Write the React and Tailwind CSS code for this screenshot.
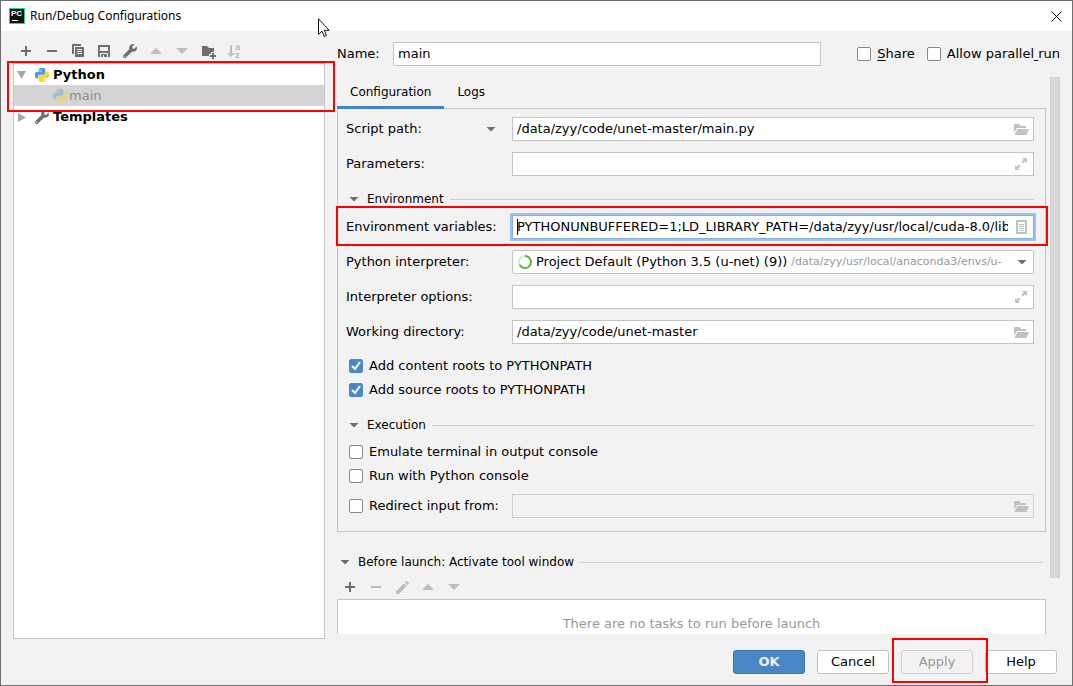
import { useState } from "react";
import { FaWrench } from "react-icons/fa";
import { MdEdit } from "react-icons/md";

const ENV_VARS =
  "PYTHONUNBUFFERED=1;LD_LIBRARY_PATH=/data/zyy/usr/local/cuda-8.0/lib64";

const PYTHON_HALF =
  "M14.25.18l.9.2.73.26.59.3.45.32.34.34.25.34.16.33.1.3.04.26.02.2-.01.13V8.5l-.05.63-.13.55-.21.46-.26.38-.3.31-.33.25-.35.19-.35.14-.33.1-.3.07-.26.04-.21.02H8.77l-.69.05-.59.14-.5.22-.41.27-.33.32-.27.35-.2.36-.15.37-.1.35-.07.32-.04.27-.02.21v3.06H3.17l-.21-.03-.28-.07-.32-.12-.35-.18-.36-.26-.36-.36-.35-.46-.32-.59-.28-.73-.21-.88-.14-1.05-.05-1.23.06-1.22.16-1.04.24-.87.32-.71.36-.57.4-.44.42-.33.42-.24.4-.16.36-.1.32-.05.24-.01h.16l.06.01h8.16v-.83H6.18l-.01-2.75-.02-.37.05-.34.11-.31.17-.28.25-.26.31-.23.38-.2.44-.18.51-.15.58-.12.64-.1.71-.06.77-.04.84-.02 1.27.05zm-6.3 1.98l-.23.33-.08.41.08.41.23.34.33.22.41.09.41-.09.33-.22.23-.34.08-.41-.08-.41-.23-.33-.33-.22-.41-.09-.41.09z";

function Icon({ children, className = "" }) {
  return (
    <svg
      viewBox="0 0 16 16"
      className={`w-4 h-4 shrink-0 ${className}`}
      fill="currentColor"
      aria-hidden="true"
    >
      {children}
    </svg>
  );
}

const AddIcon = () => (
  <Icon>
    <path d="M7 3h2v4h4v2H9v4H7V9H3V7h4z" />
  </Icon>
);

const RemoveIcon = () => (
  <Icon>
    <path d="M3 7h10v2H3z" />
  </Icon>
);

const CopyIcon = () => (
  <Icon>
    <path d="M2 1h9v2H4v8H2z" />
    <path
      fillRule="evenodd"
      d="M5 4h9v10H5zM7 6v1h5V6zM7 8v1h5V8zM7 10v1h5v-1z"
    />
  </Icon>
);

const SaveIcon = () => (
  <Icon>
    <path
      fillRule="evenodd"
      d="M2 2h12v12h-2v-4H4v4H2zM4 4v4h8V4zM5 11h6v3H8v-2H7v2H5z"
    />
  </Icon>
);

const UpIcon = () => (
  <Icon>
    <path d="M8 5l6 6H2z" />
  </Icon>
);

const DownIcon = () => (
  <Icon>
    <path d="M2 5h12l-6 6z" />
  </Icon>
);

const NewFolderIcon = () => (
  <Icon>
    <path d="M2 3h5l2 2h5v4h-3v2H9v2H2z" />
    <path d="M12 10h2v2h2v2h-2v2h-2v-2h-2v-2h2z" />
  </Icon>
);

const SortIcon = () => (
  <Icon>
    <path d="M4 2h2v8h3l-4 4-4-4h3z" />
    <text x="9" y="7" fontSize="8" fontWeight="bold">
      a
    </text>
    <text x="9" y="15" fontSize="8" fontWeight="bold">
      z
    </text>
  </Icon>
);

const FolderIcon = () => (
  <Icon>
    <path d="M1 3h5l2 2h5v2H4l-3 5z" />
    <path d="M4.500 8H16l-2.500 6H1.500z" />
  </Icon>
);

const ExpandIcon = () => (
  <Icon>
    <path d="M9 2h5v5l-1.700-1.700-2.300 2.300-1.600-1.600 2.300-2.300zM2 14V9l1.700 1.700L6 8.400 7.600 10l-2.300 2.300L7 14z" />
  </Icon>
);

const ListIcon = () => (
  <Icon>
    <path
      fillRule="evenodd"
      d="M3 1h11v14H3zM5 3v10h7V3zM6 5h5v1H6zM6 7h5v1H6zM6 9h5v1H6zM6 11h4v1H6z"
    />
  </Icon>
);

function PythonIcon({ className = "" }) {
  return (
    <svg
      viewBox="0 0 24 24"
      className={`w-[14px] h-[14px] shrink-0 ${className}`}
      aria-hidden="true"
    >
      <path d={PYTHON_HALF} fill="#4b9fd5" />
      <path d={PYTHON_HALF} fill="#ffd21f" transform="rotate(180 12 12)" />
    </svg>
  );
}

function Arrow({ className = "" }) {
  return (
    <svg
      viewBox="0 0 10 10"
      className={`w-[10px] h-[10px] shrink-0 ${className}`}
      fill="currentColor"
      aria-hidden="true"
    >
      <path d="M0.500 3h9L5 7.500z" />
    </svg>
  );
}

function TreeArrow({ className = "" }) {
  return (
    <svg
      viewBox="0 0 10 10"
      className={`w-[10px] h-[10px] shrink-0 text-[#a8a8a8] ${className}`}
      fill="currentColor"
      aria-hidden="true"
    >
      <path d="M0 1h9L4.500 9z" />
    </svg>
  );
}

function ToolButton({ label, disabled, children }) {
  return (
    <button
      type="button"
      aria-label={label}
      disabled={disabled}
      className="w-[26px] h-6 flex items-center justify-center text-[#6e6e6e] disabled:text-[#bdbdbd]"
    >
      {children}
    </button>
  );
}

function Checkbox({ id, defaultChecked = false, children }) {
  const [checked, setChecked] = useState(defaultChecked);
  return (
    <div className="h-6 flex items-center gap-[6px]">
      <span className="relative w-[14px] h-[14px] shrink-0">
        <input
          id={id}
          type="checkbox"
          checked={checked}
          onChange={(e) => setChecked(e.target.checked)}
          className="block appearance-none w-[14px] h-[14px] rounded-xs bg-white border border-[#878787] checked:bg-[#4a88cc] checked:border-[#4a88cc]"
        />
        {checked && (
          <svg
            viewBox="0 0 14 14"
            className="absolute inset-0 pointer-events-none"
            fill="none"
            stroke="#fff"
            strokeWidth="2"
            aria-hidden="true"
          >
            <path d="M3 7l3 3 5-7" />
          </svg>
        )}
      </span>
      <label htmlFor={id} className="whitespace-pre">
        {children}
      </label>
    </div>
  );
}

function FieldRow({ id, label, extra, children }) {
  return (
    <div className="relative flex items-center">
      <div className="w-[166px] shrink-0 flex items-center justify-between pr-4">
        <label htmlFor={id} className="whitespace-nowrap">
          {label}
        </label>
        {extra}
      </div>
      {children}
    </div>
  );
}

function TextField({ id, label, value = "", icon, action, focused, disabled }) {
  return (
    <div
      className={`relative flex-1 min-w-0 h-6 flex items-center border ${
        focused
          ? "border-[#87afda] ring-2 ring-[#97c3f3] bg-white"
          : disabled
            ? "border-[#cfcfcf]"
            : "border-[#c4c4c4] bg-white"
      }`}
    >
      {focused && <span className="absolute left-1 top-[3px] w-px h-4 bg-black" />}
      <input
        id={id}
        type="text"
        aria-label={label}
        defaultValue={value}
        disabled={disabled}
        spellCheck={false}
        className="flex-1 min-w-0 h-full pl-1 pb-0.5 bg-transparent outline-none"
      />
      <button
        type="button"
        aria-label={action}
        disabled={disabled}
        className="w-[25px] h-full flex items-center justify-center text-[#bcc2c6]"
      >
        {icon}
      </button>
    </div>
  );
}

function SectionHeader({ children }) {
  return (
    <div className="h-4 flex items-center text-xs">
      <button type="button" className="flex items-center gap-2">
        <Arrow className="text-[#6e6e6e]" />
        <span className="whitespace-nowrap">{children}</span>
      </button>
      <span className="ml-[6px] flex-1 h-px bg-[#cdcdcd]" />
    </div>
  );
}

// red frame drawn round a highlighted area
function Highlight({ className }) {
  return (
    <span
      className={`absolute z-10 border-2 border-[#ff0000] pointer-events-none ${className}`}
    />
  );
}

function TitleBar() {
  return (
    <header className="h-[30px] shrink-0 bg-white flex items-center pl-2 pr-[10px]">
      <svg viewBox="0 0 16 16" className="w-4 h-4" aria-hidden="true">
        <rect width="16" height="16" fill="#21d789" />
        <rect x="1" y="1" width="14" height="14" fill="#111" />
        <text
          x="2"
          y="8"
          fontSize="8"
          fontWeight="bold"
          fontFamily="Liberation Sans"
          fill="#fff"
        >
          PC
        </text>
        <rect x="3" y="12" width="6" height="1" fill="#fff" />
      </svg>
      <h1 className="ml-[5px] flex-1 text-xs font-['Noto_Sans',sans-serif]">
        Run/Debug Configurations
      </h1>
      <button type="button" aria-label="Close">
        <svg
          viewBox="0 0 11 11"
          className="w-[11px] h-[11px]"
          stroke="#000"
          aria-hidden="true"
        >
          <path d="M.5.5l10 10M10.500.5l-10 10" />
        </svg>
      </button>
    </header>
  );
}

function Sidebar() {
  return (
    <aside className="w-[312px] shrink-0 pt-2 flex flex-col">
      <div className="h-6 flex">
        <ToolButton label="Add">
          <AddIcon />
        </ToolButton>
        <ToolButton label="Remove">
          <RemoveIcon />
        </ToolButton>
        <ToolButton label="Copy">
          <CopyIcon />
        </ToolButton>
        <ToolButton label="Save">
          <SaveIcon />
        </ToolButton>
        <ToolButton label="Edit templates">
          <FaWrench size={14} />
        </ToolButton>
        <ToolButton label="Move up" disabled>
          <UpIcon />
        </ToolButton>
        <ToolButton label="Move down" disabled>
          <DownIcon />
        </ToolButton>
        <ToolButton label="New folder">
          <NewFolderIcon />
        </ToolButton>
        <ToolButton label="Sort" disabled>
          <SortIcon />
        </ToolButton>
      </div>
      <div className="relative flex-1 bg-white border border-[#c4c4c4]">
        <Highlight className="-top-[3px] -left-[7px] -right-[11px] h-[51px]" />
        <ul>
          <li>
            <div className="h-[21px] pl-[3px] flex items-center font-bold">
              <TreeArrow />
              <PythonIcon className="ml-2 mr-1" />
              Python
            </div>
            <ul>
              <li className="h-[21px] pl-[39px] flex items-center gap-[2px] bg-[#d4d4d4] text-[#8c8c8c]">
                <PythonIcon className="opacity-40" />
                main
              </li>
            </ul>
          </li>
          <li className="h-[21px] pl-[3px] flex items-center font-bold">
            <TreeArrow className="-rotate-90" />
            <FaWrench size={14} className="ml-2 mr-1 text-[#6e6e6e]" />
            Templates
          </li>
        </ul>
      </div>
    </aside>
  );
}

function ConfigurationForm() {
  return (
    <div className="border border-[#c4c4c4] pt-2 pl-2 pr-[11px] pb-[13px]">
      <div className="flex flex-col gap-[11px]">
        <FieldRow
          id="script"
          label="Script path:"
          extra={
            <button type="button" aria-label="Choose target">
              <Arrow className="text-[#6e6e6e]" />
            </button>
          }
        >
          <TextField
            id="script"
            value="/data/zyy/code/unet-master/main.py"
            icon={<FolderIcon />}
            action="Browse"
          />
        </FieldRow>
        <FieldRow id="params" label="Parameters:">
          <TextField id="params" icon={<ExpandIcon />} action="Expand" />
        </FieldRow>
      </div>

      <div className="mt-[15px] mb-2 pl-[3px]">
        <SectionHeader>Environment</SectionHeader>
      </div>

      <div className="flex flex-col gap-[11px]">
        <FieldRow id="env" label="Environment variables:">
          <TextField
            id="env"
            value={ENV_VARS}
            icon={<ListIcon />}
            action="Edit variables"
            focused
          />
          <Highlight className="-top-[9px] -left-[10px] -right-[14px] -bottom-[7px]" />
        </FieldRow>
        <FieldRow id="interpreter" label="Python interpreter:">
          <div className="flex-1 min-w-0 h-6 pl-1 pr-[6px] flex items-center bg-white border border-[#c4c4c4] rounded-xs">
            <svg
              viewBox="0 0 16 16"
              className="w-4 h-4 shrink-0"
              fill="none"
              strokeWidth="2"
              aria-hidden="true"
            >
              <path d="M8 2a6 6 0 1 1-5.200 9" stroke="#62b543" />
              <path
                d="M2.800 11A6 6 0 0 1 8 2"
                stroke="#62b543"
                strokeOpacity="0.6"
                strokeDasharray="1 1"
              />
            </svg>
            <select
              id="interpreter"
              className="ml-[3px] shrink-0 appearance-none field-sizing-content bg-transparent outline-none"
            >
              <option>Project Default (Python 3.5 (u-net) (9))</option>
            </select>
            <span className="ml-1 flex-1 min-w-0 overflow-hidden whitespace-nowrap text-[11px] text-[#999999]">
              /data/zyy/usr/local/anaconda3/envs/u-
            </span>
            <Arrow className="text-[#6e6e6e]" />
          </div>
        </FieldRow>
        <FieldRow id="options" label="Interpreter options:">
          <TextField id="options" icon={<ExpandIcon />} action="Expand" />
        </FieldRow>
        <FieldRow id="workdir" label="Working directory:">
          <TextField
            id="workdir"
            value="/data/zyy/code/unet-master"
            icon={<FolderIcon />}
            action="Browse"
          />
        </FieldRow>
      </div>

      <div className="mt-[10px] pl-[3px]">
        <Checkbox id="content-roots" defaultChecked>
          Add content roots to PYTHONPATH
        </Checkbox>
        <Checkbox id="source-roots" defaultChecked>
          Add source roots to PYTHONPATH
        </Checkbox>
      </div>

      <div className="mt-[15px] mb-[7px] pl-[3px]">
        <SectionHeader>Execution</SectionHeader>
      </div>

      <div className="pl-[3px]">
        <Checkbox id="emulate">Emulate terminal in output console</Checkbox>
        <Checkbox id="console">Run with Python console</Checkbox>
        <div className="mt-[6px] flex">
          <div className="w-[163px] shrink-0">
            <Checkbox id="redirect">Redirect input from:</Checkbox>
          </div>
          <TextField
            id="redirect-file"
            label="Input file"
            icon={<FolderIcon />}
            action="Browse"
            disabled
          />
        </div>
      </div>
    </div>
  );
}

function BeforeLaunch() {
  return (
    <section className="mt-[22px]">
      <div className="pl-[3px] pr-[3px]">
        <SectionHeader>Before launch: Activate tool window</SectionHeader>
      </div>
      <div className="mt-[5px] flex">
        <ToolButton label="Add task">
          <AddIcon />
        </ToolButton>
        <ToolButton label="Remove task" disabled>
          <RemoveIcon />
        </ToolButton>
        <ToolButton label="Edit task" disabled>
          <MdEdit size={17} />
        </ToolButton>
        <ToolButton label="Move task up" disabled>
          <UpIcon />
        </ToolButton>
        <ToolButton label="Move task down" disabled>
          <DownIcon />
        </ToolButton>
      </div>
      <div className="h-20 pt-4 bg-white border border-[#c4c4c4] text-center text-[#999999]">
        There are no tasks to run before launch
      </div>
    </section>
  );
}

function Editor() {
  const [tab, setTab] = useState("Configuration");
  return (
    <main className="flex-1 min-w-0 pt-[11px] pb-[5px] flex flex-col">
      <div className="h-6 shrink-0 flex items-center">
        <label htmlFor="name" className="w-14">
          Name:
        </label>
        <input
          id="name"
          type="text"
          defaultValue="main"
          className="flex-1 min-w-0 h-full px-1 pb-0.5 bg-white border border-[#c4c4c4] outline-none"
        />
        <div className="ml-9 flex gap-3">
          <Checkbox id="share">
            <u className="underline-offset-2">S</u>hare
          </Checkbox>
          <Checkbox id="parallel">
            Allow parallel<u className="underline-offset-2"> </u>run
          </Checkbox>
        </div>
      </div>

      <div className="mt-[11px] flex-1 min-h-0 flex">
        <div className="flex-1 min-w-0 -ml-px pl-px pr-1 overflow-hidden">
          <div role="tablist" className="-mb-px flex">
            {["Configuration", "Logs"].map((name) => (
              <button
                key={name}
                type="button"
                role="tab"
                aria-selected={tab === name}
                onClick={() => setTab(name)}
                className="relative h-8 px-[13px] text-xs border-b-[3px] border-transparent aria-selected:border-[#4083c9]"
              >
                {name}
              </button>
            ))}
          </div>
          <ConfigurationForm />
          <BeforeLaunch />
        </div>
        <div className="w-[10px] h-[90%] shrink-0 bg-[#d9d9d9] border border-[#d2d2d2]" />
      </div>
    </main>
  );
}

function Footer() {
  const base = "w-[72px] h-6 rounded-[3px] border";
  return (
    <footer className="shrink-0 pt-[11px] pb-[11px] pr-[15px] flex justify-end gap-3">
      <button
        type="button"
        className={`${base} bg-[#4a86c7] border-[#3d75b2] text-[#f0f0f0] font-bold`}
      >
        OK
      </button>
      <button type="button" className={`${base} bg-white border-[#c0c0c0]`}>
        Cancel
      </button>
      <div className="relative">
        <button
          type="button"
          disabled
          className={`${base} border-[#cfcfcf] text-[#999999]`}
        >
          Apply
        </button>
        <Highlight className="-top-3 -left-[9px] -right-[15px] -bottom-[9px]" />
      </div>
      <button type="button" className={`${base} bg-white border-[#c0c0c0]`}>
        Help
      </button>
    </footer>
  );
}

export default function App() {
  return (
    <div className="relative h-screen flex flex-col bg-[#f2f2f2] border border-[#6e6e6e] text-black text-[13px] leading-4 font-['DejaVu_Sans',sans-serif]">
      <TitleBar />
      <div className="flex-1 min-h-0 pl-3 pr-3 flex gap-3">
        <Sidebar />
        <Editor />
      </div>
      <Footer />
      <svg
        viewBox="0 0 12 20"
        className="absolute left-[317px] top-[17px] w-3 h-5 pointer-events-none"
        fill="#fff"
        stroke="#111"
        aria-hidden="true"
      >
        <path d="M.5.8v15.700l3.500-3.400 2.300 5.400 2.200-1-2.300-5.200h5z" />
      </svg>
    </div>
  );
}
